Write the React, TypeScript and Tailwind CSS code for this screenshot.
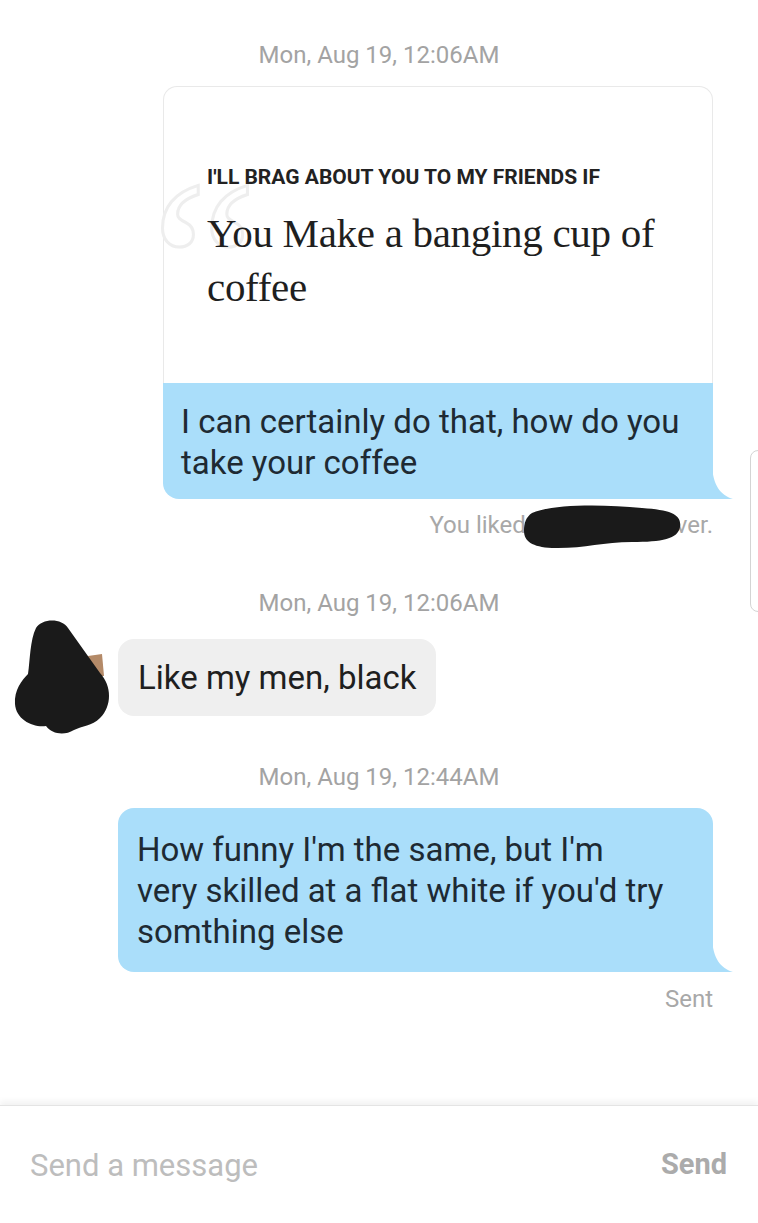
import React from 'react';

const sans = "font-['Roboto','Noto_Sans',sans-serif]";

function Tail() {
    return (
        <svg className="absolute bottom-0 right-[-20px]" width="21" height="34" viewBox="0 0 21 34">
            <path d="M0 0 C1 20 8 30 21 34 L0 34 Z" fill="#aadefa" />
        </svg>
    );
}

function Stamp({ children, className = '' }: { children: React.ReactNode; className?: string }) {
    return <div className={`text-center text-[24px] leading-[30px] text-[#a3a3a3] ${className}`}>{children}</div>;
}

export default function App() {
    return (
        <div className={`relative w-[758px] h-[1223px] bg-white flex flex-col overflow-hidden ${sans}`}>
            {/* スクロールインジケータ */}
            <div className="absolute right-[-12px] top-[450px] w-[20px] h-[162px] rounded-[8px] border border-[#d4d4d4]" />

            <div className="flex-1 flex flex-col pt-[40px]">
                <Stamp>Mon, Aug 19, 12:06AM</Stamp>

                {/* プロンプトカード */}
                <div className="relative ml-[163px] mr-[45px] mt-[16px]">
                    <div className="relative rounded-t-[14px] border border-b-0 border-[#e9e9e9] pt-[77px] pb-[69px] pl-[43px] pr-[20px]">
                        <span
                            aria-hidden="true"
                            className="absolute left-[-13px] top-[57px] font-['Liberation_Serif',serif] text-[240px] leading-[240px] text-transparent [-webkit-text-stroke:3px_#eeeeee] select-none"
                        >
                            “
                        </span>
                        <div className="relative text-[21px] leading-[26px] font-bold text-[#222]">
                            I'LL BRAG ABOUT YOU TO MY FRIENDS IF
                        </div>
                        <div className="relative mt-[16px] font-['Liberation_Serif',serif] text-[41px] leading-[54px] tracking-[-0.3px] text-[#1f1f1f]">
                            You Make a banging cup of
                            <br />
                            coffee
                        </div>
                    </div>
                    <div className="relative bg-[#aadefa] rounded-bl-[16px] pl-[18px] pr-[20px] pt-[18px] pb-[16px] text-[33px] leading-[41px] text-[#1e2a33]">
                        I can certainly do that, how do you
                        <br />
                        take your coffee
                        <Tail />
                    </div>
                </div>

                <div className="mt-[12px] mr-[45px] flex justify-end text-[24px] leading-[28px] text-[#a8a8a8]">
                    <span>You liked</span>
                    <span className="relative w-[150px]">
                        <svg className="absolute left-[-4px] top-[-10px]" width="162" height="50" viewBox="0 0 162 50">
                            <path
                                d="M10 12 C30 3 80 3 120 7 C150 9 160 14 158 26 C156 38 140 41 110 41 C80 41 60 48 30 47 C10 46 2 40 2 30 C2 22 4 16 10 12 Z"
                                fill="#1a1a1a"
                            />
                        </svg>
                    </span>
                    <span>ver.</span>
                </div>

                <Stamp className="mt-[49px]">Mon, Aug 19, 12:06AM</Stamp>

                <div className="flex items-center">
                    <svg className="ml-[12px]" width="102" height="118" viewBox="0 0 102 118">
                        <path d="M76 38 L90 36 L92 58 L80 58 Z" fill="#b48a68" />
                        <path
                            d="M24 10 C30 0 50 0 56 10 L88 55 C100 68 100 88 88 100 C80 108 70 108 62 112 C52 118 40 116 34 108 C22 110 4 102 3 86 C2 72 10 62 16 56 C18 42 18 22 24 10 Z"
                            fill="#1a1a1a"
                        />
                    </svg>
                    <div className="ml-[4px] bg-[#efefef] rounded-[16px] px-[20px] py-[18px] text-[33px] leading-[41px] text-[#1f1f1f]">
                        Like my men, black
                    </div>
                </div>

                <Stamp className="mt-[26px]">Mon, Aug 19, 12:44AM</Stamp>

                <div className="relative ml-[118px] mr-[45px] mt-[16px] bg-[#aadefa] rounded-[16px] rounded-br-none pl-[19px] pr-[20px] pt-[21px] pb-[20px] text-[33px] leading-[41px] text-[#1e2a33]">
                    How funny I'm the same, but I'm
                    <br />
                    very skilled at a flat white if you'd try
                    <br />
                    somthing else
                    <Tail />
                </div>

                <div className="mt-[13px] mr-[45px] text-right text-[24px] leading-[28px] text-[#a8a8a8]">Sent</div>
            </div>

            {/* 入力欄 */}
            <div className="h-[118px] border-t border-[#e4e4e4] shadow-[0_-4px_6px_rgba(0,0,0,0.05)] flex items-center justify-between pl-[30px] pr-[31px]">
                <span className="text-[31px] text-[#bdbdbd] mt-[4px]">Send a message</span>
                <span className="text-[29px] font-bold text-[#ababab]">Send</span>
            </div>
        </div>
    );
}
